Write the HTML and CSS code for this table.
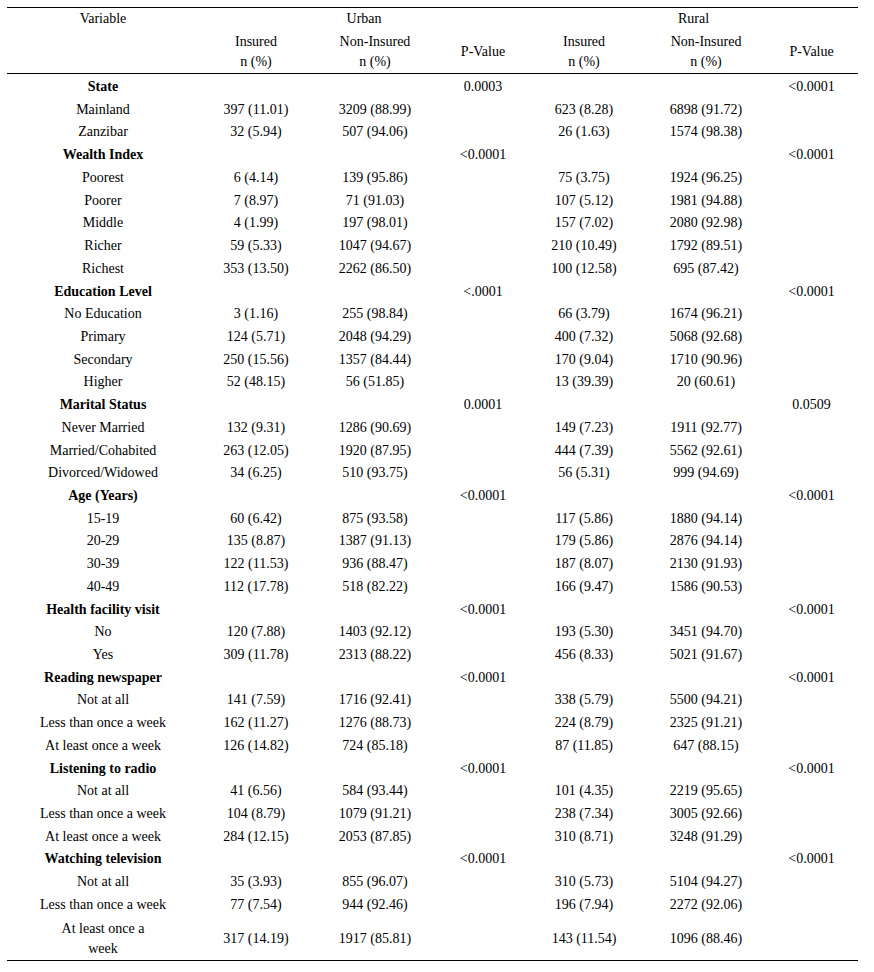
FILE: index.html
```html
<!DOCTYPE html>
<html>
<head>
<meta charset="utf-8">
<link rel="stylesheet" href="styles.css">
</head>
<body>
<table class="stats">
<colgroup>
<col class="c-var"><col class="c-ins"><col class="c-non"><col class="c-p"><col class="c-rins"><col class="c-rnon"><col class="c-rp">
</colgroup>
<thead>
<tr class="h1"><th>Variable</th><th colspan="3">Urban</th><th colspan="3">Rural</th></tr>
<tr class="h2"><th></th><th>Insured<br>n (%)</th><th>Non-Insured<br>n (%)</th><th class="pv">P-Value</th><th>Insured<br>n (%)</th><th>Non-Insured<br>n (%)</th><th class="pv last">P-Value</th></tr>
</thead>
<tbody>
<tr class="grp first"><td>State</td><td></td><td></td><td>0.0003</td><td></td><td></td><td class="last">&lt;0.0001</td></tr>
<tr><td>Mainland</td><td>397 (11.01)</td><td>3209 (88.99)</td><td></td><td>623 (8.28)</td><td>6898 (91.72)</td><td class="last"></td></tr>
<tr><td>Zanzibar</td><td>32 (5.94)</td><td>507 (94.06)</td><td></td><td>26 (1.63)</td><td>1574 (98.38)</td><td class="last"></td></tr>
<tr class="grp"><td>Wealth Index</td><td></td><td></td><td>&lt;0.0001</td><td></td><td></td><td class="last">&lt;0.0001</td></tr>
<tr><td>Poorest</td><td>6 (4.14)</td><td>139 (95.86)</td><td></td><td>75 (3.75)</td><td>1924 (96.25)</td><td class="last"></td></tr>
<tr><td>Poorer</td><td>7 (8.97)</td><td>71 (91.03)</td><td></td><td>107 (5.12)</td><td>1981 (94.88)</td><td class="last"></td></tr>
<tr><td>Middle</td><td>4 (1.99)</td><td>197 (98.01)</td><td></td><td>157 (7.02)</td><td>2080 (92.98)</td><td class="last"></td></tr>
<tr><td>Richer</td><td>59 (5.33)</td><td>1047 (94.67)</td><td></td><td>210 (10.49)</td><td>1792 (89.51)</td><td class="last"></td></tr>
<tr><td>Richest</td><td>353 (13.50)</td><td>2262 (86.50)</td><td></td><td>100 (12.58)</td><td>695 (87.42)</td><td class="last"></td></tr>
<tr class="grp"><td>Education Level</td><td></td><td></td><td>&lt;.0001</td><td></td><td></td><td class="last">&lt;0.0001</td></tr>
<tr><td>No Education</td><td>3 (1.16)</td><td>255 (98.84)</td><td></td><td>66 (3.79)</td><td>1674 (96.21)</td><td class="last"></td></tr>
<tr><td>Primary</td><td>124 (5.71)</td><td>2048 (94.29)</td><td></td><td>400 (7.32)</td><td>5068 (92.68)</td><td class="last"></td></tr>
<tr><td>Secondary</td><td>250 (15.56)</td><td>1357 (84.44)</td><td></td><td>170 (9.04)</td><td>1710 (90.96)</td><td class="last"></td></tr>
<tr><td>Higher</td><td>52 (48.15)</td><td>56 (51.85)</td><td></td><td>13 (39.39)</td><td>20 (60.61)</td><td class="last"></td></tr>
<tr class="grp"><td>Marital Status</td><td></td><td></td><td>0.0001</td><td></td><td></td><td class="last">0.0509</td></tr>
<tr><td>Never Married</td><td>132 (9.31)</td><td>1286 (90.69)</td><td></td><td>149 (7.23)</td><td>1911 (92.77)</td><td class="last"></td></tr>
<tr><td>Married/Cohabited</td><td>263 (12.05)</td><td>1920 (87.95)</td><td></td><td>444 (7.39)</td><td>5562 (92.61)</td><td class="last"></td></tr>
<tr><td>Divorced/Widowed</td><td>34 (6.25)</td><td>510 (93.75)</td><td></td><td>56 (5.31)</td><td>999 (94.69)</td><td class="last"></td></tr>
<tr class="grp"><td>Age (Years)</td><td></td><td></td><td>&lt;0.0001</td><td></td><td></td><td class="last">&lt;0.0001</td></tr>
<tr><td>15-19</td><td>60 (6.42)</td><td>875 (93.58)</td><td></td><td>117 (5.86)</td><td>1880 (94.14)</td><td class="last"></td></tr>
<tr><td>20-29</td><td>135 (8.87)</td><td>1387 (91.13)</td><td></td><td>179 (5.86)</td><td>2876 (94.14)</td><td class="last"></td></tr>
<tr><td>30-39</td><td>122 (11.53)</td><td>936 (88.47)</td><td></td><td>187 (8.07)</td><td>2130 (91.93)</td><td class="last"></td></tr>
<tr><td>40-49</td><td>112 (17.78)</td><td>518 (82.22)</td><td></td><td>166 (9.47)</td><td>1586 (90.53)</td><td class="last"></td></tr>
<tr class="grp"><td>Health facility visit</td><td></td><td></td><td>&lt;0.0001</td><td></td><td></td><td class="last">&lt;0.0001</td></tr>
<tr><td>No</td><td>120 (7.88)</td><td>1403 (92.12)</td><td></td><td>193 (5.30)</td><td>3451 (94.70)</td><td class="last"></td></tr>
<tr><td>Yes</td><td>309 (11.78)</td><td>2313 (88.22)</td><td></td><td>456 (8.33)</td><td>5021 (91.67)</td><td class="last"></td></tr>
<tr class="grp"><td>Reading newspaper</td><td></td><td></td><td>&lt;0.0001</td><td></td><td></td><td class="last">&lt;0.0001</td></tr>
<tr><td>Not at all</td><td>141 (7.59)</td><td>1716 (92.41)</td><td></td><td>338 (5.79)</td><td>5500 (94.21)</td><td class="last"></td></tr>
<tr><td>Less than once a week</td><td>162 (11.27)</td><td>1276 (88.73)</td><td></td><td>224 (8.79)</td><td>2325 (91.21)</td><td class="last"></td></tr>
<tr><td>At least once a week</td><td>126 (14.82)</td><td>724 (85.18)</td><td></td><td>87 (11.85)</td><td>647 (88.15)</td><td class="last"></td></tr>
<tr class="grp"><td>Listening to radio</td><td></td><td></td><td>&lt;0.0001</td><td></td><td></td><td class="last">&lt;0.0001</td></tr>
<tr><td>Not at all</td><td>41 (6.56)</td><td>584 (93.44)</td><td></td><td>101 (4.35)</td><td>2219 (95.65)</td><td class="last"></td></tr>
<tr><td>Less than once a week</td><td>104 (8.79)</td><td>1079 (91.21)</td><td></td><td>238 (7.34)</td><td>3005 (92.66)</td><td class="last"></td></tr>
<tr><td>At least once a week</td><td>284 (12.15)</td><td>2053 (87.85)</td><td></td><td>310 (8.71)</td><td>3248 (91.29)</td><td class="last"></td></tr>
<tr class="grp"><td>Watching television</td><td></td><td></td><td>&lt;0.0001</td><td></td><td></td><td class="last">&lt;0.0001</td></tr>
<tr><td>Not at all</td><td>35 (3.93)</td><td>855 (96.07)</td><td></td><td>310 (5.73)</td><td>5104 (94.27)</td><td class="last"></td></tr>
<tr><td>Less than once a week</td><td>77 (7.54)</td><td>944 (92.46)</td><td></td><td>196 (7.94)</td><td>2272 (92.06)</td><td class="last"></td></tr>
<tr class="end"><td>At least once a<br>week</td><td>317 (14.19)</td><td>1917 (85.81)</td><td></td><td>143 (11.54)</td><td>1096 (88.46)</td><td class="last"></td></tr>
</tbody>
</table>
</body>
</html>
```
FILE: styles.css
```css
html, body {
  margin: 0;
  padding: 0;
  background: #ffffff;
}
body {
  padding: 7px 0 0 7px;
  font-family: "Liberation Serif", "Times New Roman", serif;
  font-size: 14px;
  color: #000000;
}
.stats {
  width: 851px;
  table-layout: fixed;
  border-collapse: collapse;
  border-top: 1px solid #000;
  border-bottom: 1px solid #000;
}
.c-var { width: 192px; }
.c-ins { width: 114px; }
.c-non { width: 124px; }
.c-p { width: 92px; }
.c-rins { width: 110px; }
.c-rnon { width: 134px; }
.c-rp { width: 85px; }
.stats th,
.stats td {
  padding: 1.36px 0;
  line-height: 20px;
  text-align: center;
  vertical-align: middle;
  font-weight: normal;
}
.stats .h1 th {
  vertical-align: top;
}
.stats .h2 th {
  border-bottom: 1px solid #000;
}
.stats .first td {
  padding-top: 2.6px;
}
.stats .end td {
  padding-top: 2.4px;
  padding-bottom: 1.4px;
}
.stats .last {
  padding-right: 8px;
}
.stats .grp td:first-child {
  font-weight: bold;
}
```
